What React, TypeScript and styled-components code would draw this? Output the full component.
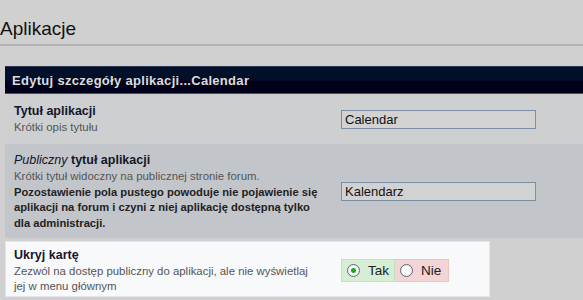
import React from 'react';
import styled, { createGlobalStyle } from 'styled-components';

const GlobalStyle = createGlobalStyle`
  html, body {
    margin: 0;
    padding: 0;
    background: #d0d0d0;
    overflow: hidden;
  }
  body {
    font-family: "Liberation Sans", Arial, sans-serif;
    color: #111;
  }
`;

const Page = styled.div`
  width: 583px;
  height: 300px;
  overflow: hidden;
`;

const PageTitle = styled.h1`
  margin: 0;
  padding: 18px 0 0 0;
  height: 26px;
  font-size: 19px;
  font-weight: normal;
  color: #111;
  line-height: 22px;
  border-bottom: 2px solid #b4b4b4;
`;

const Panel = styled.div`
  margin: 20px 0 0 5px;
  width: 600px;
`;

const PanelHeader = styled.div`
  height: 28px;
  box-sizing: border-box;
  padding-left: 7px;
  display: flex;
  align-items: center;
  background: linear-gradient(#02102b 0%, #020f28 50%, #00001a 55%, #00001a 100%);
  border-top: 1px solid #2c3650;
  border-bottom: 1px solid #4a5062;
  color: #dcdcdc;
  font-size: 13px;
  letter-spacing: 0.3px;
  font-weight: bold;
`;

const Row = styled.div<{ $bg: string; $height: number; $width?: number; $outline?: boolean }>`
  display: grid;
  grid-template-columns: 327px 1fr;
  align-items: center;
  box-sizing: border-box;
  height: ${(p) => p.$height}px;
  width: ${(p) => (p.$width ? `${p.$width}px` : 'auto')};
  background: ${(p) => p.$bg};
  border: ${(p) => (p.$outline ? '1px solid #e4e6ea' : 'none')};
  padding-left: ${(p) => (p.$outline ? 8 : 9)}px;
  padding-top: ${(p) => (p.$outline ? 3 : 1)}px;
`;

const Gap = styled.div`
  height: 3px;
`;

const Label = styled.div`
  font-size: 11.4px;
  line-height: 15.5px;
  color: #555;
  padding-right: 22px;
`;

const LabelTitle = styled.div`
  font-size: 12.5px;
  font-weight: bold;
  color: #15152a;
  line-height: 17px;
  & > em {
    font-weight: normal;
  }
`;

const Strong = styled.span`
  font-weight: bold;
  font-size: 11.2px;
  color: #222;
`;

const TextInput = styled.input`
  width: 195px;
  height: 19px;
  box-sizing: border-box;
  border: 1px solid #7a8ea4;
  background: #d2d2d2;
  font-family: "Liberation Sans", Arial, sans-serif;
  font-size: 13px;
  color: #111;
  padding: 0 3px;
  margin: 0;
  outline: none;
`;

const RadioGroup = styled.div`
  display: flex;
  height: 23px;
`;

const RadioOption = styled.label<{ $tone: 'yes' | 'no' }>`
  display: flex;
  align-items: center;
  gap: 8px;
  width: 54px;
  box-sizing: border-box;
  padding-left: 5px;
  font-size: 13.5px;
  color: #222;
  background: ${(p) => (p.$tone === 'yes' ? '#d6eed4' : '#f3d5d5')};
  border: 1px solid ${(p) => (p.$tone === 'yes' ? '#bfe3bb' : '#ebc3c3')};
  border-left-width: ${(p) => (p.$tone === 'yes' ? 1 : 0)}px;
`;

const RadioDot = styled.span<{ $checked?: boolean }>`
  width: 13px;
  height: 13px;
  box-sizing: border-box;
  border-radius: 50%;
  border: 1px solid #5c6b7c;
  background: radial-gradient(circle, ${(p) => (p.$checked ? '#1ea51e 0, #1ea51e 2px,' : '')} #fdfdfd 3px, #dfe3e8 100%);
`;

export default function App() {
  return (
    <Page>
      <GlobalStyle />
      <PageTitle>Aplikacje</PageTitle>
      <Panel>
        <PanelHeader>Edytuj szczegóły aplikacji...Calendar</PanelHeader>
        <Row $bg="#cdcfd1" $height={50}>
          <Label>
            <LabelTitle>Tytuł aplikacji</LabelTitle>
            Krótki opis tytułu
          </Label>
          <TextInput defaultValue="Calendar" />
        </Row>
        <Row $bg="#c2c5c9" $height={94}>
          <Label>
            <LabelTitle>
              <em>Publiczny</em> tytuł aplikacji
            </LabelTitle>
            Krótki tytuł widoczny na publicznej stronie forum.
            <br />
            <Strong>
              Pozostawienie pola pustego powoduje nie pojawienie się aplikacji na forum i czyni z niej aplikację
              dostępną tylko dla administracji.
            </Strong>
          </Label>
          <TextInput defaultValue="Kalendarz" />
        </Row>
        <Gap />
        <Row $bg="#f8f9fb" $height={56} $width={485} $outline>
          <Label>
            <LabelTitle>Ukryj kartę</LabelTitle>
            Zezwól na dostęp publiczny do aplikacji, ale nie wyświetlaj jej w menu głównym
          </Label>
          <RadioGroup>
            <RadioOption $tone="yes">
              <RadioDot $checked />
              Tak
            </RadioOption>
            <RadioOption $tone="no">
              <RadioDot />
              Nie
            </RadioOption>
          </RadioGroup>
        </Row>
      </Panel>
    </Page>
  );
}
